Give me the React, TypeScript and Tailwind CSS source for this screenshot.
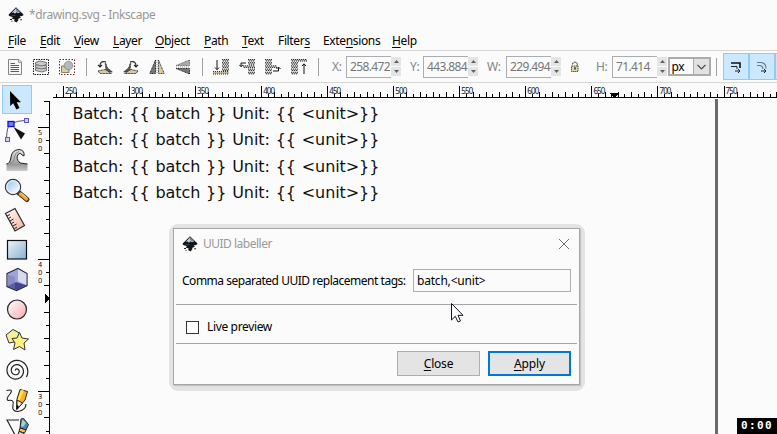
import type { ReactNode } from "react";

const ui = "font-['Noto_Sans',sans-serif]";

function Logo({ className }: { className: string }) {
  return (
    <svg viewBox="0 0 16 16" className={className}>
      <path d="M8 0.3 L15.3 7.2 Q16 8.5 14 9 L11.5 9.6 L13 10.6 L10 12 L10.5 13 L8.5 15.5 L6 14 L6.8 12.6 L3.5 11.5 L5 10.3 L1.5 9 Q0 8.3 0.9 7.2 Z" fill="#11141a" />
      <path d="M8 1.3 L12.2 5.3 L10 6.3 L8.5 5.3 L7 6.8 L5.6 5.5 L3.5 6 Z" fill="#c3ccd8" />
      <path d="M8 1.3 L12.2 5.3 L10 5.6 L8 3.8 Z" fill="#6f8199" />
      <path d="M2.5 7.8 L8 8.6 L6 9.3 Z" fill="#4d5f77" />
      <path d="M2 12h2v1h-2z M12.2 12.2h1.8v1h-1.8z M3.5 13.8h1v1h-1z" fill="#222" />
    </svg>
  );
}

function Icon({ children }: { children: ReactNode }) {
  return (
    <svg viewBox="0 0 16 16" className="h-4 w-4 shrink-0">
      {children}
    </svg>
  );
}

function Separator() {
  return (
    <div className="flex w-[22px] shrink-0 justify-center">
      <div className="h-[18px] w-px bg-[#a0a0a0]" />
    </div>
  );
}

const turn = (
  <>
    <path d="M8 2 L10.5 9 L15.5 13 H9 Z" fill="#555" stroke="#222" strokeWidth="0.7" strokeDasharray="1 .6" />
    <path d="M1 12 L8 10.5 L14.5 14.5 H3 Z" fill="#d5c9a6" stroke="#333" strokeWidth="1" strokeDasharray="1 .5" />
    <path d="M7.8 2.8 Q3 1.8 3 7 M1 5.8 L3 8 L5 5.8" fill="none" stroke="#222" strokeWidth="1.1" />
  </>
);

function Bars({ x, w, ys }: { x: number; w: number; ys: number[] }) {
  return (
    <>
      {ys.map((y) => (
        <g key={y}>
          <rect x={x} y={y} width={w} height="2.4" fill="#bbb" />
          <path d={`M${x} ${y + 0.5}h${w}M${x + 1} ${y + 2}h${w - 1}`} stroke="#222" strokeWidth="0.9" strokeDasharray="1 1" />
        </g>
      ))}
    </>
  );
}

function Field({ label, value, labelClass }: { label: string; value: string; labelClass: string }) {
  return (
    <div className="flex h-[22px] shrink-0 items-center">
      <span className={`shrink-0 text-[12px] tracking-[-0.4px] text-[#858585] ${labelClass}`}>{label}</span>
      <div className="flex h-[22px] w-[45px] items-center border border-r-0 border-[#abadb3] pl-[3px] text-[12px] tracking-[-0.650px] text-[#777]">
        {value}
      </div>
      <div className="flex h-[19px] w-[10px] flex-col gap-px">
        <div className="flex h-[9px] items-center justify-center bg-[#e4e4e4]">
          <svg viewBox="0 0 5 3" className="h-[3px] w-[5px]"><path d="M0 3L2.5 0L5 3Z" fill="#606060" /></svg>
        </div>
        <div className="flex h-[9px] items-center justify-center bg-[#e4e4e4]">
          <svg viewBox="0 0 5 3" className="h-[3px] w-[5px]"><path d="M0 0L2.5 3L5 0Z" fill="#606060" /></svg>
        </div>
      </div>
    </div>
  );
}

function Toolbar() {
  return (
    <div className="flex h-[33px] items-center overflow-hidden border-y border-[#d7d7d7] pl-[7px]">
      <div className="flex shrink-0 gap-[10px]">
        <Icon>
          <path d="M1.5 .5H12L14.5 3V15.5H1.5Z" fill="#f5f5f5" stroke="#858585" />
          <path d="M11.5 .5V3.5H14.5" fill="none" stroke="#999" />
          <path d="M3.5 4.500H8 M3.5 6.5H12 M3.5 8.5H12 M3.5 10.5H12 M3.5 12.5H12" stroke="#35639f" strokeWidth="1.1" />
        </Icon>
        <Icon>
          <rect x=".5" y=".5" width="15" height="15" fill="none" stroke="#111" strokeDasharray="1.5 1" />
          {[9.5, 6.5, 3.5].map((y) => (
            <path key={y} d={`M2.5 ${y}L7 ${y - 1.5}L13.5 ${y}V${y + 2}L9 ${y + 3.5}L2.5 ${y + 2}Z`} fill="#ccc" stroke="#555" strokeWidth=".8" />
          ))}
        </Icon>
        <Icon>
          <rect x=".5" y=".5" width="15" height="15" fill="none" stroke="#6b2a30" strokeDasharray="1.5 1.5" />
          <path d="M2.5 7H10V13.5H2.5Z" fill="#dccf9c" stroke="#666" strokeWidth=".8" />
          <circle cx="9.5" cy="6.5" r="4.3" fill="#b4b8bd" stroke="#666" strokeWidth=".8" strokeDasharray="1 .5" />
        </Icon>
      </div>
      <Separator />
      <div className="flex shrink-0 gap-[10px]">
        <Icon>{turn}</Icon>
        <Icon><g transform="translate(16 0) scale(-1 1)">{turn}</g></Icon>
        <Icon>
          <path d="M6.5 1V14.5H.8Z" fill="#777" stroke="#222" strokeDasharray="1 .6" />
          <path d="M9.5 1V14.5H15.2Z" fill="#d8ca9d" stroke="#333" strokeDasharray="1 .6" />
          <path d="M8 1V15" stroke="#666" strokeWidth=".7" strokeDasharray="1 1" />
        </Icon>
        <Icon>
          <path d="M14.5 1V6.5H1Z" fill="#aaa" stroke="#555" strokeWidth=".8" strokeDasharray="1 .6" />
          <path d="M14.5 15V9.5H1Z" fill="#777" stroke="#222" strokeDasharray="1 .6" />
          <path d="M1 8H15" stroke="#666" strokeWidth=".7" strokeDasharray="1 1" />
        </Icon>
      </div>
      <Separator />
      <div className="flex shrink-0 gap-[10px]">
        <Icon>
          <Bars x={9} w={7} ys={[0, 3.2, 6.4, 9.6]} />
          <rect x="0" y="12.5" width="16" height="2.5" fill="#c9bb91" /><path d="M0 12.6H16M0 15H16" stroke="#222" strokeDasharray="1 1" />
          <path d="M4 1V10.5M2 8.5L4 10.7L6 8.5" fill="none" stroke="#111" />
        </Icon>
        <Icon>
          <Bars x={9} w={7} ys={[0, 3.2, 9.6, 12.8]} /><Bars x={4} w={12} ys={[6.4]} />
          <path d="M7 4H2V7.5M.3 5.8L2 7.7L4 5.8" fill="none" stroke="#111" />
        </Icon>
        <Icon>
          <Bars x={0} w={7} ys={[0, 3.2, 9.6, 12.8]} /><Bars x={0} w={12} ys={[6.4]} />
          <path d="M8 12H13.5V8.5M11.5 10L13.5 8L15.5 10" fill="none" stroke="#111" />
        </Icon>
        <Icon>
          <Bars x={0} w={7} ys={[3.2, 6.4, 9.6, 12.8]} /><Bars x={0} w={16} ys={[0]} />
          <path d="M13 15V5M11 7L13 4.8L15 7" fill="none" stroke="#111" />
        </Icon>
      </div>
      <Separator />
      <Field label="X:" value="258.472" labelClass="ml-[3px] w-[14px]" />
      <Field label="Y:" value="443.884" labelClass="ml-[9px] w-[13px]" />
      <Field label="W:" value="229.494" labelClass="ml-[9px] w-[19px]" />
      <svg viewBox="0 0 10 12" className="ml-[9px] h-3 w-[10px] shrink-0">
        <path d="M2.5 3.500V3Q5 -1 7.3 3V5" fill="none" stroke="#555" strokeWidth="1.2" strokeDasharray="1.500 .5" />
        <rect x="1.500" y="5" width="6.500" height="5.5" fill="#e3daa8" stroke="#555" strokeDasharray="1.5 .5" />
        <path d="M4 6.3H6V8.5H4Z" fill="#555" />
      </svg>
      <Field label="H:" value="71.414" labelClass="ml-[16px] w-[16px]" />
      <div className="ml-px flex h-[19px] w-[43px] shrink-0 items-center border-2 border-[#acacac]">
        <span className="w-[23px] pl-[1.5px] text-[12px] leading-none tracking-[-0.3px] text-black">px</span>
        <div className="flex h-full flex-1 items-center justify-center border-l border-[#acacac] bg-[#e2e2e2]">
          <svg viewBox="0 0 9 6" className="h-[6px] w-[9px]"><path d="M.5 .8L4.5 4.8L8.5 .8" fill="none" stroke="#444" strokeWidth="1.2" /></svg>
        </div>
      </div>
      <div className="ml-[5px] h-[18px] w-px shrink-0 bg-[#a0a0a0]" />
      <div className="ml-[6px] flex h-[27px] shrink-0">
        <div className="flex w-[26px] items-center justify-center border border-[#91c9f7] bg-[#cce8ff]">
          <svg viewBox="0 0 12 12" className="h-3 w-3">
            <path d="M1 2H10V7" fill="none" stroke="#111" strokeWidth="1.6" />
            <path d="M1 5.500H7V8" fill="none" stroke="#222" />
            <path d="M5 10H10M8 8L10 10L8 12" fill="none" stroke="#222" />
          </svg>
        </div>
        <div className="flex w-[26px] items-center justify-center border border-[#91c9f7] bg-[#cce8ff]">
          <svg viewBox="0 0 12 12" className="h-3 w-3">
            <path d="M1 1.5H5Q10 2 10 7.500M1 4.5H4Q7 5 7 8" fill="none" stroke="#68798a" strokeWidth="1.1" />
            <path d="M5 10H10M8 8L10 10L8 12" fill="none" stroke="#222" />
          </svg>
        </div>
        <div className="w-[26px] border border-[#91c9f7] bg-[#cce8ff]" />
      </div>
    </div>
  );
}

// Archimedean spiral, wound clockwise and ending at the lower right.
const spiral = Array.from({ length: 91 }, (_, i) => {
  const turns = (i / 90) * 2.55;
  const angle = Math.PI * 2 * (turns - 2.55) + 0.55;
  const r = 0.8 + turns * 4.35;
  return `${i ? "L" : "M"}${(16.3 + r * Math.cos(angle)).toFixed(2)} ${(14.8 + r * Math.sin(angle)).toFixed(2)}`;
}).join("");

const tools: { id: string; art: ReactNode }[] = [
  { id: "select", art: <path d="M10 5L10.2 20L13.2 17.2L16.4 23.5L19.5 22L16.7 16.2H21Z" fill="#000" /> },
  {
    id: "node",
    art: (
      <>
        <path d="M6.5 22Q7 9 11 8Q17 4.5 25 4.5" fill="none" stroke="#555" />
        <rect x="8" y="5.5" width="6" height="5" fill="#6d83f0" stroke="#1010d8" strokeWidth="1.3" />
        <rect x="24.5" y="2.5" width="4" height="4" fill="#cfcfff" stroke="#5757d8" />
        <rect x="5.5" y="21.5" width="4" height="4" fill="#cfcfff" stroke="#5757d8" />
        <path d="M13.5 11L25 17.5L21 23.5Z" fill="#111" />
      </>
    ),
  },
  {
    id: "tweak",
    art: (
      <>
        <path d="M6.500 18Q10 18 11 11Q12 4 19 3.500Q25 4 24 10L22 9Q20.500 6 18.500 8Q15 12 20 17L27.500 18V25H6.500Z" fill="url(#wave)" />
        <path d="M6.500 18Q10 18 11 11Q12 4 19 3.500Q25 4 24 10L22 9Q20.500 6 18.500 8Q15 12 20 17L27.500 18" fill="none" stroke="#222" />
        <path d="M10 18Q14 17 14.500 11Q15 6.500 19 5.500" fill="none" stroke="#888" />
      </>
    ),
  },
  {
    id: "zoom",
    art: (
      <>
        <path d="M18.500 16.500L27 23.500" stroke="#333" strokeWidth="5" strokeLinecap="round" />
        <path d="M20.500 18L26.500 23" stroke="#f5a52c" strokeWidth="3.500" strokeLinecap="round" />
        <path d="M21 17L27 22" stroke="#ffd98c" />
        <circle cx="13" cy="11" r="7.600" fill="url(#glass)" stroke="#33373c" strokeWidth="1.200" />
        <circle cx="13" cy="11" r="6.300" fill="none" stroke="#f4f7fa" />
      </>
    ),
  },
  {
    id: "measure",
    art: (
      <>
        <path d="M5.500 7.500L15 2.500L24.500 19.500L15 25Z" fill="url(#peach)" stroke="#2b2b2b" strokeWidth="1.200" />
        <path d="M7 10L10 8.500M8.500 12.500L11 11M10 15L13.500 13M11.500 17.500L14 16M13 20L16.500 18M14.500 22.500L17 21" stroke="#222" />
      </>
    ),
  },
  { id: "rect", art: <rect x="7.500" y="4.500" width="19" height="18.500" fill="url(#blue)" stroke="#111" strokeWidth="1.200" /> },
  {
    id: "box",
    art: (
      <>
        <path d="M7 7.500L18 2.500L27 7.500V19.500L16.500 24.500L7 20.500Z" fill="#a7abd8" stroke="#252735" strokeWidth="1.200" />
        <path d="M18 3.200L26.400 8V19L18 15Z" fill="#d8daf0" />
        <path d="M7.600 20L16 16L26.400 19.200L16.500 23.900Z" fill="#434592" />
        <path d="M7.600 8.500L18 3.200V15L7.600 19.500Z" fill="#a0a4d8" />
        <path d="M7.600 8.500L15 11V23L7.600 20Z" fill="#7377b4" fillOpacity=".5" />
      </>
    ),
  },
  { id: "ellipse", art: <circle cx="17" cy="13.500" r="9.500" fill="url(#pink)" stroke="#272727" strokeWidth="1.200" /> },
  {
    id: "star",
    art: (
      <>
        <path d="M6 9L13 3.500L19.500 7L17 15.500L9 17Z" fill="#f4ef9d" stroke="#333" />
        <path d="M19.500 6.500L22 12L28.500 13L24 17L25 24L19.500 20.500L13.500 23.500L15 17L12 12.500L17 12Z" fill="#fff27e" stroke="#333" />
      </>
    ),
  },
  { id: "spiral", art: <path d={spiral} fill="none" stroke="#222" strokeWidth="1.200" /> },
  {
    id: "pencil",
    art: (
      <>
        <path d="M6.500 4.500Q14 2.500 10 8Q5.500 13 8 14.500Q14.500 13 13 19Q11.500 25.500 18 25.500Q26 24 26 18" fill="none" stroke="#222" strokeWidth="1.100" />
        <path d="M20 3.500L27.500 5.500L25 14L19 21L16.500 23L17 13Z" fill="#ffae18" stroke="#222" />
        <path d="M21 4L24 4.500L20 14H17.500Z" fill="#ffe15c" />
        <path d="M17 14L22.500 17L17 23.500Z" fill="#f7e9ce" stroke="#222" /><path d="M17 19L19 20.500L16.500 24Z" fill="#000" />
      </>
    ),
  },
  {
    id: "pen",
    art: (
      <>
        <path d="M19 4H7L14.500 18V24" fill="none" stroke="#222" strokeWidth="1.100" />
        <path d="M21 3L23.500 2.500L28.500 8.500L26 14L20 12Z" fill="#4d88b3" stroke="#222" />
        <path d="M22.500 3.500L26 7L23 11L21 10Z" fill="#a9cee4" />
        <path d="M20 12L26 14L24.500 17L19 15.500Z" fill="#f8c451" stroke="#222" /><path d="M19 15.500L24 17L19 24L17 21Z" fill="#ddd" stroke="#222" />
      </>
    ),
  },
];

function Toolbox() {
  return (
    <div className="flex w-[38px] shrink-0 flex-col overflow-hidden pt-px">
      <svg className="h-0 w-0 shrink-0">
        <defs>
          <linearGradient id="wave" x1="0" x2="0" y1="0" y2="1"><stop stopColor="#e5e5e5" /><stop offset=".7" stopColor="#999" /><stop offset="1" stopColor="#ccc" /></linearGradient>
          <linearGradient id="glass" x1="0" y1="0" x2="1" y2="1"><stop stopColor="#8dbbe5" /><stop offset=".7" stopColor="#e7f2fc" /></linearGradient>
          <linearGradient id="peach" x1="0" y1="0" x2="1" y2="1"><stop stopColor="#fff" /><stop offset="1" stopColor="#f2ae9b" /></linearGradient>
          <linearGradient id="blue" x1="0" y1="0" x2="1" y2="1"><stop stopColor="#eff5fa" /><stop offset="1" stopColor="#83afd4" /></linearGradient>
          <linearGradient id="pink" x1="0" y1="0" x2="1" y2="1"><stop stopColor="#fff" /><stop offset="1" stopColor="#f8a8ae" /></linearGradient>
        </defs>
      </svg>
      {tools.map(({ id, art }) => (
        <div key={id} className={`ml-[2px] w-[30px] shrink-0 ${id === "select" ? "mb-[2px] h-[29px] border border-[#91c9f7] bg-[#cce8ff]" : "h-[30px]"}`}>
          <svg viewBox="2 0 30 30" className={id === "select" ? "-ml-px h-[30px] w-[30px]" : "h-[30px] w-[30px]"}>{art}</svg>
        </div>
      ))}
    </div>
  );
}

function TopRuler() {
  const ticks = Array.from({ length: 112 }, (_, i) => i - 1);
  return (
    <svg viewBox="38 84 739 14" className="h-[14px] w-[739px] shrink-0" shapeRendering="crispEdges">
      <path d="M53 97.500H777" stroke="#000" />
      {ticks.map((i) => {
        const h = i % 10 === 0 ? 11 : i % 2 === 0 ? 5 : 3;
        return <rect key={i} x={Math.round(63 + i * 6.605)} y={97 - h} width="1" height={h} fill="#000" />;
      })}
      {Array.from({ length: 11 }, (_, i) => (
        <text key={i} x={65 + i * 66.05} y="94" fontSize="8" textLength="12" fontFamily="Noto Sans, sans-serif" fill="#111">
          {250 + i * 50}
        </text>
      ))}
      <path d="M610 93H619L614.500 98Z" fill="#000" />
    </svg>
  );
}

function SideRuler() {
  return (
    <svg viewBox="38 98 12 336" className="h-[336px] w-3 shrink-0" shapeRendering="crispEdges">
      <path d="M49.500 101V434" stroke="#000" />
      {Array.from({ length: 26 }, (_, n) => n - 2).map((i) => {
        const w = i % 10 === 0 ? 11 : i % 2 === 0 ? 5 : 3;
        return <rect key={i} x={49 - w} y={Math.round(127 + i * 13.2)} width={w} height="1" fill="#000" />;
      })}
      {["500", "400", "300"].map((label, i) =>
        label.split("").map((digit, j) => (
          <text key={`${i}${j}`} x="38" y={135 + i * 132 + j * 8} fontSize="6.800" fontFamily="DejaVu Sans, sans-serif" fill="#222">
            {digit}
          </text>
        )),
      )}
      <path d="M45 294L50 298.500L45 303Z" fill="#000" />
    </svg>
  );
}

const menu: [string, string, string, string][] = [
  ["", "F", "ile", "w-[32px]"],
  ["", "E", "dit", "w-[34px]"],
  ["", "V", "iew", "w-[39px]"],
  ["", "L", "ayer", "w-[42px]"],
  ["", "O", "bject", "w-[49px]"],
  ["", "P", "ath", "w-[38px]"],
  ["", "T", "ext", "w-[36px]"],
  ["Filter", "s", "", "w-[45px]"],
  ["Exte", "n", "sions", "w-[69px]"],
  ["", "H", "elp", "w-[40px]"],
];

function Dialog() {
  return (
    <div className={`absolute left-[169px] top-[224px] rounded-[9px] bg-[#e3e3e3] pb-[6px] pl-1 pr-[5px] pt-1 text-[12px] text-black ${ui}`}>
      <div className="h-[157px] w-[407px] border border-[#a5a5a5] bg-[#fbfbfb] shadow-[1px_1px_1px_#c4c4c4]">
        <div className="flex h-[30px] items-center pl-2 pr-[9px]">
          <Logo className="h-4 w-4" />
          <span className="ml-[5px] flex-1 tracking-[-0.5px] text-[#999]">UUID labeller</span>
          <svg viewBox="0 0 12 12" className="h-3 w-3"><path d="M1 1L11 11M11 1L1 11" stroke="#777" fill="none" /></svg>
        </div>
        <div className="mt-[10px] flex h-[23px] items-center pl-2">
          <span className="w-[231px] shrink-0 whitespace-nowrap tracking-[-0.480px]">Comma separated UUID replacement tags:</span>
          <div className="flex h-[23px] w-[158px] items-center border border-[#abadb3] pl-[3px] tracking-[-0.2px]">batch,&lt;unit&gt;</div>
        </div>
        <div className="mx-[2px] mt-3 h-px bg-[#a5a5a5]" />
        <div className="flex h-[38px] items-center pl-3 pt-[6px]">
          <div className="h-[13px] w-[13px] border border-[#333] bg-white" />
          <span className="ml-2 tracking-[-0.35px]">Live preview</span>
        </div>
        <div className="mx-[2px] h-px bg-[#a5a5a5]" />
        <div className="mt-[7px] flex justify-end gap-2 pr-2">
          <div className="flex h-[25px] w-[83px] items-center justify-center border border-[#adadad] bg-[#e4e4e4]">
            <span className="tracking-[-0.2px]"><u className="underline-offset-2">C</u>lose</span>
          </div>
          <div className="flex h-[25px] w-[83px] items-center justify-center border-2 border-[#0078d7] bg-[#e4e4e4]">
            <span className="tracking-[-0.1px]"><u className="underline-offset-2">A</u>pply</span>
          </div>
        </div>
      </div>
    </div>
  );
}

export default function App() {
  return (
    <div className={`relative flex h-[434px] w-[777px] flex-col overflow-hidden bg-[#fbfbfb] ${ui}`}>
      <div className="flex h-[30px] shrink-0 items-center pl-2">
        <Logo className="h-4 w-4 shrink-0" />
        <span className="ml-[5px] text-[12px] tracking-[-0.4px] text-[#999]">*drawing.svg - Inkscape</span>
      </div>
      <div className="flex h-5 shrink-0 items-center pl-2 pt-[2px] text-[12px] tracking-[-0.35px] text-black">
        {menu.map(([before, key, after, width]) => (
          <span key={before + key + after} className={`shrink-0 whitespace-nowrap ${width}`}>
            {before}<u className="underline-offset-2">{key}</u>{after}
          </span>
        ))}
      </div>
      <div className="h-[34px] shrink-0"><Toolbar /></div>
      <div className="flex min-h-0 flex-1">
        <Toolbox />
        <div className="flex min-w-0 flex-1 flex-col">
          <TopRuler />
          <div className="flex min-h-0 flex-1">
            <SideRuler />
            <div className="flex flex-1">
              <div className="w-[665px] shrink-0 whitespace-pre pl-[22.500px] pt-[3px] font-['DejaVu_Sans',sans-serif] text-[16px] leading-[26.4px] tracking-[-0.08px] text-[#111] [word-spacing:0.900px]">
                {[0, 1, 2, 3].map((line) => (
                  <div key={line}>{"Batch: {{ batch }} Unit: {{ <unit>}}"}</div>
                ))}
              </div>
              <div className="mt-px w-[3px] bg-[#6b6b6b]" />
            </div>
          </div>
        </div>
      </div>
      <Dialog />
      <svg viewBox="0 0 13 20" className="absolute left-[451px] top-[303px] h-5 w-[13px]">
        <path d="M.5 .5V17L4.300 13.300L7 19L9.500 18L7 12.300H12Z" fill="#fff" stroke="#15151f" />
      </svg>
      <div className="absolute bottom-0 right-0 flex h-4 w-10 items-center justify-center bg-black font-['DejaVu_Sans_Mono',monospace] text-[11px] font-bold tracking-[1.400px] text-white">
        0:00
      </div>
    </div>
  );
}
